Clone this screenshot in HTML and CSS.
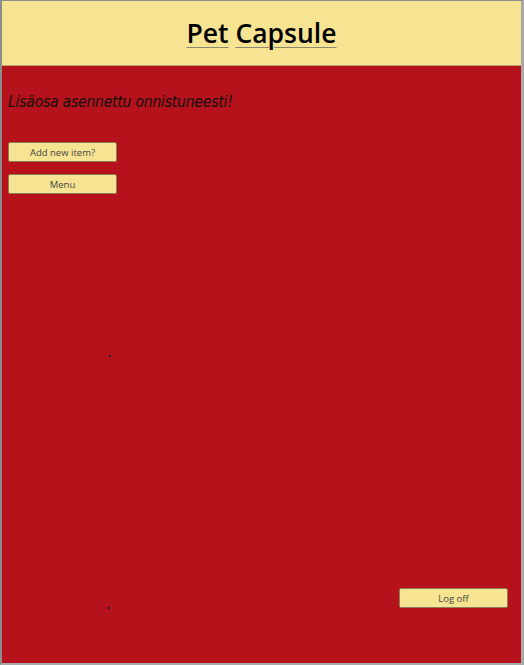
FILE: index.html
```html
<!DOCTYPE html>
<html>
<head>
<meta charset="utf-8">
<link rel="stylesheet" href="styles.css">
</head>
<body>
<div class="frame">
  <header class="header">
    <h1 class="title"><a href="#" class="title-link">Pet</a> <a href="#" class="title-link">Capsule</a></h1>
  </header>
  <main class="content">
    <p class="message">Lisäosa asennettu onnistuneesti!</p>
    <div class="actions">
      <button class="btn">Add new item?</button>
      <button class="btn">Menu</button>
    </div>
    <span class="dot dot-a"></span>
    <div class="footer-row">
      <button class="btn">Log off</button>
    </div>
    <span class="dot dot-b"></span>
  </main>
</div>
</body>
</html>
```
FILE: styles.css
```css
html, body {
  margin: 0;
  padding: 0;
  background: #ffffff;
}
.frame {
  width: 524px;
  height: 665px;
  box-sizing: border-box;
  border-left: 2px solid #8c8c8c;
  border-top: 1px solid #8c8c8c;
  border-right: 3px solid #a8a8a8;
  border-bottom: 2px solid #a8a8a8;
  display: flex;
  flex-direction: column;
  position: relative;
}
.header {
  height: 65px;
  flex-shrink: 0;
  box-sizing: border-box;
  background: #f6e493;
  border-bottom: 1px solid #b8a867;
  display: flex;
  justify-content: center;
  align-items: center;
}
.title {
  margin: 0;
  font-family: "Open Sans", "DejaVu Sans", sans-serif;
  font-size: 26.5px;
  font-weight: 600;
  color: #000;
  letter-spacing: 0;
}
.title-link {
  color: #000;
  text-decoration: underline;
  text-decoration-color: #8a8a70;
  text-underline-offset: 4px;
  text-decoration-thickness: 1px;
}
.content {
  flex: 1;
  background: #b5121b;
  padding: 0 6px;
  display: flex;
  flex-direction: column;
  position: relative;
}
.message {
  margin: 27px 0 0 0;
  font-family: "DejaVu Sans Condensed", "DejaVu Sans", sans-serif;
  font-style: italic;
  font-size: 15.5px;
  color: #111;
  letter-spacing: -0.2px;
}
.actions {
  margin-top: 31px;
  display: flex;
  flex-direction: column;
  gap: 12px;
}
.btn {
  width: 109px;
  height: 20px;
  padding: 0;
  background: #f6e493;
  border: 1px solid #8a7f5a;
  border-radius: 2px;
  font-family: "Open Sans", "DejaVu Sans", sans-serif;
  font-size: 9.5px;
  color: #444;
}
.footer-row {
  margin-top: auto;
  margin-bottom: 55px;
  display: flex;
  justify-content: flex-end;
  padding-right: 7px;
}
.dot {
  position: absolute;
  width: 2px;
  height: 2px;
  background: #222;
}
.dot-a { left: 107px; top: 289px; }
.dot-b { left: 106px; top: 541px; }
```
